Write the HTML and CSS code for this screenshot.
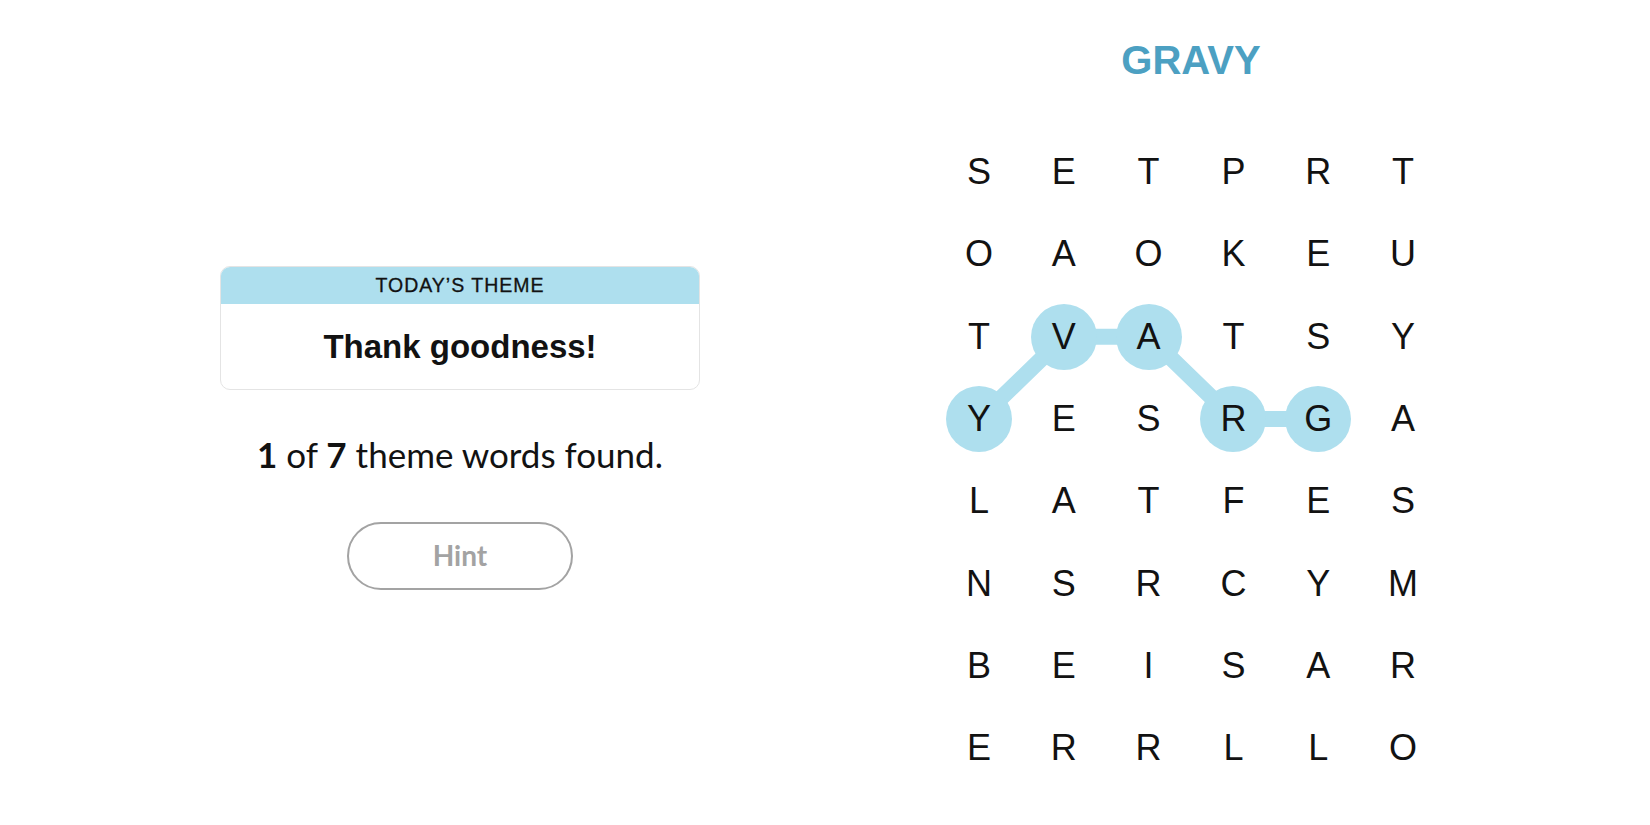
FILE: index.html
```html
<!DOCTYPE html>
<html lang="en">
<head>
<meta charset="utf-8">
<title>Strands</title>
<link rel="stylesheet" href="styles.css">
</head>
<body>
<main class="page">
  <section class="left">
    <div class="theme-card">
      <div class="theme-head">TODAY’S THEME</div>
      <div class="theme-body">Thank goodness!</div>
    </div>
    <p class="progress"><b>1</b> of <b>7</b> theme words found.</p>
    <button class="hint" type="button">Hint</button>
  </section>
  <section class="right">
    <h1 class="current">GRAVY</h1>
    <div class="board">
      <svg class="paths" viewBox="0 0 508.8 658.4" aria-hidden="true">
        <polyline points="42.4,288.05 127.2,205.75 212,205.75 296.8,288.05 381.6,288.05" fill="none" stroke="#aedfee" stroke-width="16" stroke-linejoin="round"/>
      </svg>
      <div class="cell"><span>S</span></div><div class="cell"><span>E</span></div><div class="cell"><span>T</span></div><div class="cell"><span>P</span></div><div class="cell"><span>R</span></div><div class="cell"><span>T</span></div>
      <div class="cell"><span>O</span></div><div class="cell"><span>A</span></div><div class="cell"><span>O</span></div><div class="cell"><span>K</span></div><div class="cell"><span>E</span></div><div class="cell"><span>U</span></div>
      <div class="cell"><span>T</span></div><div class="cell sel"><span>V</span></div><div class="cell sel"><span>A</span></div><div class="cell"><span>T</span></div><div class="cell"><span>S</span></div><div class="cell"><span>Y</span></div>
      <div class="cell sel"><span>Y</span></div><div class="cell"><span>E</span></div><div class="cell"><span>S</span></div><div class="cell sel"><span>R</span></div><div class="cell sel"><span>G</span></div><div class="cell"><span>A</span></div>
      <div class="cell"><span>L</span></div><div class="cell"><span>A</span></div><div class="cell"><span>T</span></div><div class="cell"><span>F</span></div><div class="cell"><span>E</span></div><div class="cell"><span>S</span></div>
      <div class="cell"><span>N</span></div><div class="cell"><span>S</span></div><div class="cell"><span>R</span></div><div class="cell"><span>C</span></div><div class="cell"><span>Y</span></div><div class="cell"><span>M</span></div>
      <div class="cell"><span>B</span></div><div class="cell"><span>E</span></div><div class="cell"><span>I</span></div><div class="cell"><span>S</span></div><div class="cell"><span>A</span></div><div class="cell"><span>R</span></div>
      <div class="cell"><span>E</span></div><div class="cell"><span>R</span></div><div class="cell"><span>R</span></div><div class="cell"><span>L</span></div><div class="cell"><span>L</span></div><div class="cell"><span>O</span></div>
    </div>
  </section>
</main>
</body>
</html>
```

FILE: styles.css
```css
* { box-sizing: border-box; }

html, body {
  margin: 0;
  padding: 0;
  background: #ffffff;
}

body {
  width: 1650px;
  height: 825px;
  overflow: hidden;
  font-family: "Liberation Sans", Arial, sans-serif;
  color: #121212;
}

.page {
  display: grid;
  grid-template-columns: 920px 542px;
  height: 825px;
}

/* Left column */
.left {
  display: flex;
  flex-direction: column;
  align-items: center;
  padding-top: 266px;
}

.theme-card {
  width: 480px;
  border: 1.5px solid #e4e4e4;
  border-radius: 10px;
  overflow: hidden;
  background: #fff;
}

.theme-head {
  height: 37px;
  background: #aedfee;
  display: flex;
  align-items: center;
  justify-content: center;
  font-size: 19.5px;
  letter-spacing: 1px;
  color: #121212;
  -webkit-text-stroke: 0.3px #121212;
}

.theme-body {
  height: 85px;
  display: flex;
  align-items: center;
  justify-content: center;
  font-size: 33px;
  font-weight: 700;
  color: #121212;
}

.progress {
  margin: 43px 0 0;
  font-family: Lato, "Liberation Sans", sans-serif;
  font-size: 35px;
  line-height: 42px;
  color: #121212;
}

.progress b {
  font-weight: 700;
}

.hint {
  margin-top: 47px;
  width: 226px;
  height: 68px;
  border: 2.5px solid #a3a3a3;
  border-radius: 34px;
  background: #fff;
  font-family: Lato, "Liberation Sans", sans-serif;
  font-weight: 700;
  font-size: 28px;
  color: #a3a3a3;
  padding: 0 0 3px;
}

/* Right column */
.right {
  display: flex;
  flex-direction: column;
  align-items: center;
  padding-top: 40px;
}

.current {
  margin: 0;
  height: 40px;
  font-size: 40px;
  line-height: 40px;
  font-weight: 700;
  color: #4ca0c2;
}

.board {
  position: relative;
  margin-top: 51px;
  display: grid;
  grid-template-columns: repeat(6, 84.8px);
  grid-template-rows: repeat(8, 82.3px);
}

.paths {
  position: absolute;
  left: 0;
  top: 0;
  width: 508.8px;
  height: 658.4px;
  z-index: 0;
}

.cell {
  position: relative;
  z-index: 1;
  display: flex;
  align-items: center;
  justify-content: center;
}

.cell span {
  width: 66px;
  height: 66px;
  border-radius: 50%;
  display: flex;
  align-items: center;
  justify-content: center;
  font-size: 36px;
  color: #121212;
}

.cell.sel span {
  background: #aedfee;
}
```
